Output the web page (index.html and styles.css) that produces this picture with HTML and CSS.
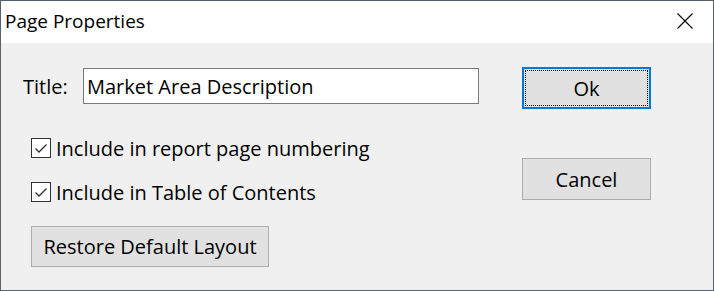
FILE: index.html
```html
<!DOCTYPE html>
<html>
<head>
    <title>Page Properties</title>
    <meta name="viewport" content="width=device-width, initial-scale=1.0">
    <link rel="stylesheet" href="styles.css">
</head>
<body>
    <div class="window">
        <div class="titlebar">
            <span class="caption">Page Properties</span>
            <span class="close">
                <svg width="16" height="16" viewBox="0 0 16 16">
                    <path d="M0.5 0.5 L15.5 15.5 M15.5 0.5 L0.5 15.5" stroke="#000" stroke-width="1.1" fill="none"/>
                </svg>
            </span>
        </div>

        <div class="content">
            <div class="left">
                <div class="title-row">
                    <label class="title-label">Title:</label>
                    <div class="textbox">Market Area Description</div>
                </div>

                <div class="check-row first">
                    <span class="checkbox">
                        <svg width="18" height="18" viewBox="0 0 18 18">
                            <path d="M3.5 9.5 L7 13 L14.5 5.5" stroke="#333" stroke-width="1.4" fill="none"/>
                        </svg>
                    </span>
                    <span>Include in report page numbering</span>
                </div>

                <div class="check-row second">
                    <span class="checkbox">
                        <svg width="18" height="18" viewBox="0 0 18 18">
                            <path d="M3.5 9.5 L7 13 L14.5 5.5" stroke="#333" stroke-width="1.4" fill="none"/>
                        </svg>
                    </span>
                    <span>Include in Table of Contents</span>
                </div>

                <button class="btn restore">Restore Default Layout</button>
            </div>

            <div class="right">
                <button class="btn ok"><span class="focus">Ok</span></button>
                <button class="btn cancel">Cancel</button>
            </div>
        </div>
    </div>
</body>
</html>
```

FILE: styles.css
```css
/* Base styles */
* {
    box-sizing: border-box;
    margin: 0;
    padding: 0;
}

body {
    font-family: 'Open Sans', 'Noto Sans', 'Liberation Sans', sans-serif;
    font-size: 20px;
    color: #000;
    background: #f0f0f0;
}

.window {
    width: 714px;
    height: 291px;
    border: 1px solid #56616d;
    background: #f0f0f0;
    display: flex;
    flex-direction: column;
}

/* Title bar */
.titlebar {
    height: 42px;
    background: #fff;
    display: flex;
    align-items: center;
    justify-content: space-between;
    padding: 0 20px 0 4px;
}

.caption {
    font-size: 19px;
    margin-top: -2px;
}

.close {
    display: flex;
    margin-top: -2px;
}

/* Dialog body */
.content {
    display: flex;
    padding-left: 21px;
    gap: 43px;
}

.left {
    width: 457px;
    display: flex;
    flex-direction: column;
}

.title-row {
    display: flex;
    align-items: center;
    margin-top: 25px;
    height: 36px;
}

.title-label {
    width: 61px;
    padding-left: 1px;
}

.textbox {
    width: 396px;
    height: 36px;
    background: #fff;
    border: 1px solid #7a7a7a;
    padding-left: 3px;
    display: flex;
    align-items: center;
}

.check-row {
    display: flex;
    align-items: center;
    height: 24px;
    padding-left: 9px;
}

.check-row.first {
    margin-top: 32px;
}

.check-row.second {
    margin-top: 20px;
}

.checkbox {
    width: 20px;
    height: 20px;
    border: 1px solid #333;
    background: #fff;
    display: flex;
    align-items: center;
    justify-content: center;
    margin-right: 5px;
}

/* Buttons */
.btn {
    font-family: inherit;
    font-size: 20px;
    color: #000;
    background: #e1e1e1;
    border: 1px solid #adadad;
    height: 42px;
    display: flex;
    align-items: center;
    justify-content: center;
}

.restore {
    width: 238px;
    height: 41px;
    margin-top: 22px;
    margin-left: 9px;
}

.right {
    display: flex;
    flex-direction: column;
}

.ok {
    width: 129px;
    margin-top: 24px;
    border: 2px solid #0078d7;
    padding: 1px;
}

.focus {
    width: 100%;
    height: 100%;
    border: 1px dotted #000;
    display: flex;
    align-items: center;
    justify-content: center;
}

.cancel {
    width: 129px;
    margin-top: 49px;
}
```
